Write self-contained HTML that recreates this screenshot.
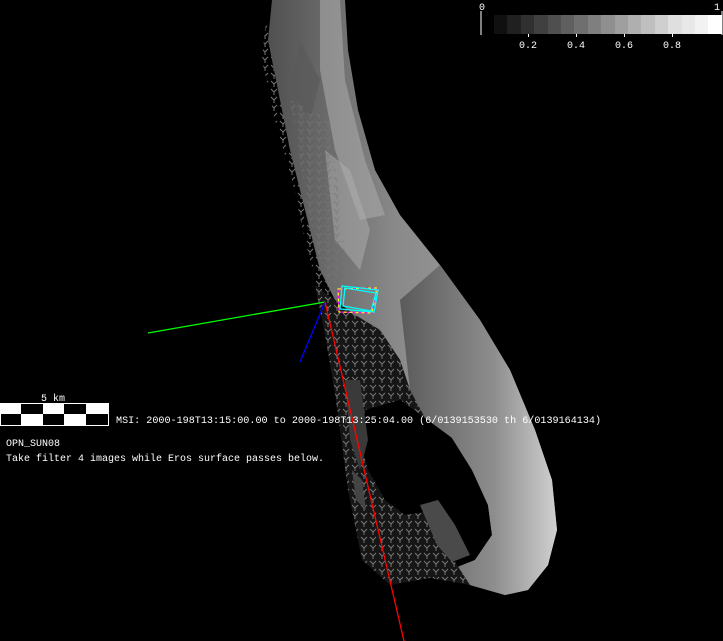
<!DOCTYPE html>
<html><head><meta charset="utf-8"><style>
html,body{margin:0;padding:0;background:#000;width:723px;height:641px;overflow:hidden}
svg{display:block}
text{font-family:"Liberation Mono","DejaVu Sans Mono",monospace;font-size:10px;fill:#fff}
</style></head><body>
<svg width="723" height="641" viewBox="0 0 723 641" xmlns="http://www.w3.org/2000/svg">
<defs>
<pattern id="tics" width="9" height="8" patternUnits="userSpaceOnUse">
<path d="M1 1 L4 4 L7 1 M4 4 L4 7" stroke="#777" stroke-width="1" fill="none"/>
</pattern>
<linearGradient id="tube" x1="0" y1="0" x2="1" y2="0">
<stop offset="0" stop-color="#505050"/><stop offset="0.45" stop-color="#8a8a8a"/><stop offset="1" stop-color="#a5a5a5"/>
</linearGradient>
<linearGradient id="low" x1="0" y1="0" x2="1" y2="0">
<stop offset="0" stop-color="#555"/><stop offset="0.6" stop-color="#8c8c8c"/><stop offset="1" stop-color="#d5d5d5"/>
</linearGradient>
</defs>
<!-- sparse outer left region -->
<path d="M266 20 L262 60 L275 120 L292 180 L305 240 L318 290 L330 300 L300 180 L285 110 L272 50 Z" fill="url(#tics)"/>
<!-- main tube -->
<path d="M272 0 L345 0 L348 50 L358 110 L375 170 L400 215 L440 265 L480 320 L510 370 L535 430 L552 480 L557 530 L548 565 L528 590 L505 595 L470 585 L450 570 L475 560 L492 535 L488 505 L472 470 L452 438 L425 418 L410 390 L400 360 L380 330 L355 315 L335 300 L320 270 L305 210 L290 150 L278 90 L268 40 Z" fill="url(#tube)"/>
<path d="M400 300 L440 265 L480 320 L510 370 L535 430 L552 480 L557 530 L548 565 L528 590 L505 595 L470 585 L450 570 L475 560 L492 535 L488 505 L472 470 L452 438 L425 418 L410 390 Z" fill="url(#low)" opacity="0.9"/>
<!-- lighter streaks upper -->
<path d="M320 0 L340 0 L345 80 L365 160 L385 215 L360 220 L335 150 L320 70 Z" fill="#a8a8a8" opacity="0.6"/>
<path d="M325 150 L350 170 L370 230 L360 270 L335 240 Z" fill="#b0b0b0" opacity="0.5"/>
<path d="M300 40 L320 80 L310 120 L290 90 Z" fill="#5a5a5a" opacity="0.7"/>
<path d="M290 100 L330 120 L345 250 L330 300 L310 220 Z" fill="url(#tics)" opacity="0.7"/>
<!-- sparse lower-left region -->
<path d="M315 285 L355 315 L380 330 L400 360 L410 390 L425 418 L400 400 L365 410 L360 440 L368 470 L385 500 L405 515 L425 512 L440 540 L455 562 L470 585 L430 578 L390 585 L362 560 L348 490 L336 400 L326 340 Z" fill="#161616"/>
<path d="M315 285 L355 315 L380 330 L400 360 L410 390 L425 418 L400 400 L365 410 L360 440 L368 470 L385 500 L405 515 L425 512 L440 540 L455 562 L470 585 L430 578 L390 585 L362 560 L348 490 L336 400 L326 340 Z" fill="url(#tics)"/>
<path d="M400 400 L425 418 L452 438 L430 430 Z" fill="#000"/>
<path d="M420 505 L438 500 L455 525 L470 555 L452 562 L437 545 Z" fill="#4a4a4a"/>
<path d="M345 380 L360 380 L368 440 L360 470 L350 440 Z" fill="#3a3a3a"/>
<path d="M352 470 L362 480 L366 510 L356 500 Z" fill="#444"/>
<!-- axes -->
<line x1="148" y1="333" x2="325" y2="302" stroke="#0f0" stroke-width="1.3"/>
<line x1="325" y1="302" x2="300" y2="362" stroke="#00f" stroke-width="1.3"/>
<line x1="325" y1="302" x2="404" y2="641" stroke="#f00" stroke-width="1.3"/>
<!-- footprint -->
<path d="M338 289 L377 288 L372 313 L339 312 Z" fill="none" stroke="#f0f" stroke-width="1.2"/>
<path d="M338 289 L377 288 L372 313 L339 312 Z" fill="none" stroke="#ff0" stroke-width="1.2" stroke-dasharray="3 3"/>
<path d="M342 286 L378 290 L374 312 L340 309 Z M345 288 L376 293 L371 311 L343 306 Z" fill="none" stroke="#0ff" stroke-width="1.3"/>
<!-- text -->
<text x="116" y="423" textLength="485" lengthAdjust="spacingAndGlyphs">MSI:  2000-198T13:15:00.00 to 2000-198T13:25:04.00 (6/0139153530 th 6/0139164134)</text>
<text x="6" y="446">OPN_SUN08</text>
<text x="6" y="461" textLength="318" lengthAdjust="spacingAndGlyphs">Take filter 4 images while Eros surface passes below.</text>
<text x="41" y="401">5 km</text>
<!-- scale bar -->
<rect x="0.5" y="403.5" width="108" height="22" fill="#fff" stroke="#fff"/>
<rect x="21" y="404" width="22" height="10" fill="#000"/>
<rect x="64" y="404" width="22" height="10" fill="#000"/>
<rect x="1" y="414" width="20" height="11" fill="#000"/>
<rect x="43" y="414" width="21" height="11" fill="#000"/>
<rect x="86" y="414" width="22" height="11" fill="#000"/>
<!-- colorbar -->
<g>
<rect x="494" y="15" width="14" height="19" fill="#101010"/>
<rect x="507" y="15" width="14" height="19" fill="#202020"/>
<rect x="521" y="15" width="14" height="19" fill="#303030"/>
<rect x="534" y="15" width="14" height="19" fill="#404040"/>
<rect x="548" y="15" width="14" height="19" fill="#4f4f4f"/>
<rect x="561" y="15" width="14" height="19" fill="#5f5f5f"/>
<rect x="574" y="15" width="14" height="19" fill="#6f6f6f"/>
<rect x="588" y="15" width="14" height="19" fill="#7f7f7f"/>
<rect x="601" y="15" width="14" height="19" fill="#8f8f8f"/>
<rect x="615" y="15" width="14" height="19" fill="#9f9f9f"/>
<rect x="628" y="15" width="14" height="19" fill="#afafaf"/>
<rect x="641" y="15" width="14" height="19" fill="#bfbfbf"/>
<rect x="655" y="15" width="14" height="19" fill="#cfcfcf"/>
<rect x="668" y="15" width="14" height="19" fill="#dfdfdf"/>
<rect x="682" y="15" width="14" height="19" fill="#e8e8e8"/>
<rect x="695" y="15" width="14" height="19" fill="#f2f2f2"/>
<rect x="708" y="15" width="14" height="19" fill="#ffffff"/>
</g>
<line x1="481" y1="11" x2="481" y2="35" stroke="#fff"/>
<line x1="722" y1="11" x2="722" y2="35" stroke="#fff"/>
<line x1="528.5" y1="34" x2="528.5" y2="37" stroke="#fff"/>
<line x1="576.5" y1="34" x2="576.5" y2="37" stroke="#fff"/>
<line x1="624.5" y1="34" x2="624.5" y2="37" stroke="#fff"/>
<line x1="672.5" y1="34" x2="672.5" y2="37" stroke="#fff"/>
<text x="479" y="10">0</text>
<text x="714" y="10">1</text>
<text x="519" y="48">0.2</text>
<text x="567" y="48">0.4</text>
<text x="615" y="48">0.6</text>
<text x="663" y="48">0.8</text>
</svg>
</body></html>
